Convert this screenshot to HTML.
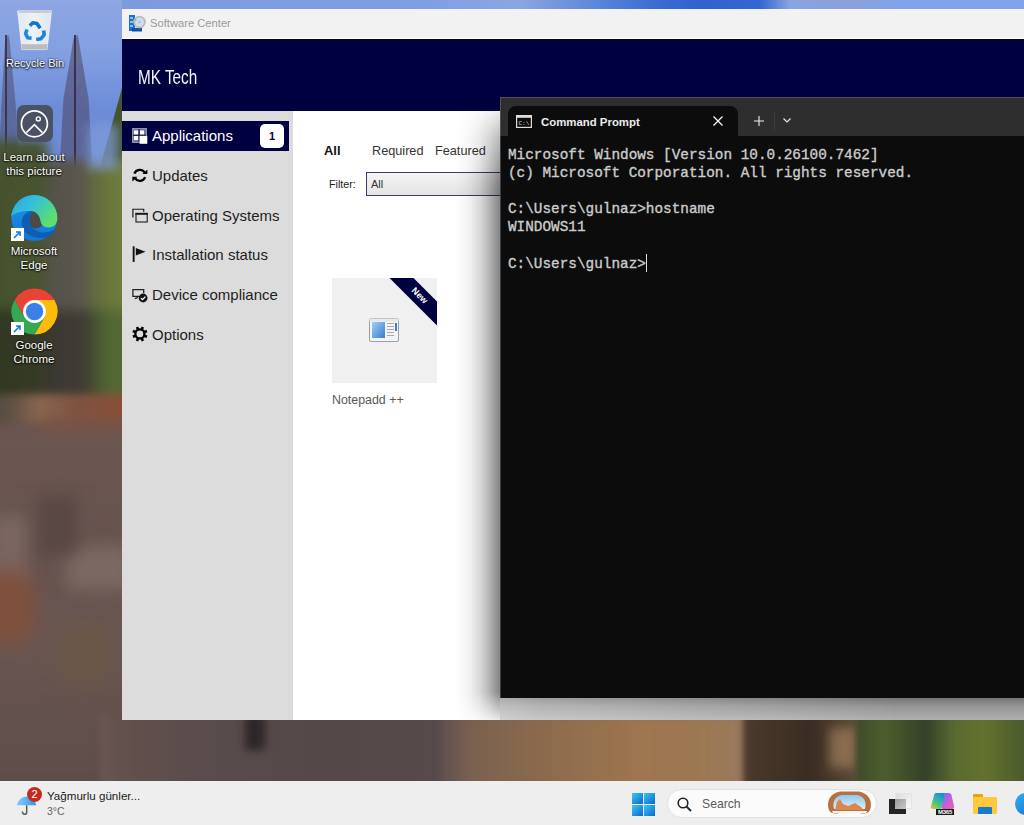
<!DOCTYPE html>
<html><head><meta charset="utf-8">
<style>
*{margin:0;padding:0;box-sizing:border-box}
html,body{width:1024px;height:825px;overflow:hidden;background:#6a5a55;font-family:"Liberation Sans",sans-serif}
.abs{position:absolute}
#bg{position:absolute;left:0;top:0;width:1024px;height:781px;overflow:hidden}
/* software center */
#sc{position:absolute;left:122px;top:9px;width:902px;height:711px;background:#fff}
#sc-title{position:absolute;left:0;top:0;width:902px;height:30px;background:#f2f2f2;border-bottom:1px solid #fff}
#sc-title .t{position:absolute;left:28px;top:8px;font-size:11.2px;color:#9a9a9a;white-space:nowrap}
#sc-head{position:absolute;left:0;top:30px;width:902px;height:72px;background:#000040}
#sc-head .t{position:absolute;left:16px;top:27px;font-size:15.3px;color:#f4f4fa;white-space:nowrap;transform:scaleY(1.27);transform-origin:0 0}
#nav{position:absolute;left:0;top:102px;width:171px;height:609px;background:#dcdcdc}
.nav-item{position:absolute;left:0;width:167px;height:30px;font-size:15px;color:#1e1e1e;white-space:nowrap}
.nav-item .lbl{position:absolute;left:30px;top:6px}
.nav-item svg{position:absolute;left:10px;top:7px}
#main{position:absolute;left:171px;top:102px;width:731px;height:609px;background:#fff}
/* cmd */
#cmd{position:absolute;left:500px;top:97px;width:524px;height:601px;background:#0c0c0c}
#cmd-tabs{position:absolute;left:0;top:0;width:524px;height:39px;background:#2e2e2e}
#cmd-tab{position:absolute;left:8px;top:9px;width:230px;height:30px;background:#0c0c0c;border-radius:8px 8px 0 0}
#cmd-text{position:absolute;left:8px;top:48.5px;font-family:"Liberation Mono",monospace;font-size:14.37px;line-height:18.2px;color:#cccccc;white-space:pre;-webkit-text-stroke:0.35px #cccccc}
/* taskbar */
#tb{position:absolute;left:0;top:781px;width:1024px;height:44px;background:#eeeeee}
.dtxt{position:absolute;color:#fff;font-size:11.5px;text-align:center;line-height:14px;text-shadow:0 0 2px #000,0 1px 2px #000;white-space:nowrap}
</style></head><body>
<div id="bg">
  <div class="abs" style="left:0;top:0;width:1024px;height:781px;background:#6a5550"></div>
  <!-- sky -->
  <div class="abs" style="left:0;top:0;width:1024px;height:230px;background:linear-gradient(180deg,#8ea6e2 0,#809ee0 60px,#7394da 150px,#7a98dc 230px)"></div>
  <div class="abs" style="left:122px;top:0;width:902px;height:12px;background:linear-gradient(90deg,#7b9ae0 0,#7e9ee6 298px,#8aa6e2 398px,#5a84da 478px,#3a6ad2 538px,#2f62d0 578px,#3466d0 638px,#88a4e2 668px,#8aa0d8 728px,#7ea2ea 778px,#7ea2ea 902px)"></div>
  
  <!-- trees in sky -->
  <div class="abs" style="left:0;top:60px;width:122px;height:100px;background:linear-gradient(180deg,rgba(110,140,215,0) 0,rgba(100,132,214,0.6) 50px,rgba(105,136,216,0.4) 100px)"></div>
  <div class="abs" style="left:-3px;top:35px;width:22px;height:150px;background:repeating-linear-gradient(170deg,rgba(80,50,90,0.65) 0 2px,rgba(60,110,120,0.35) 2px 4px);clip-path:polygon(38% 0,55% 0,100% 70%,80% 100%,0 100%);filter:blur(2px)"></div>
  <div class="abs" style="left:5px;top:35px;width:2px;height:150px;background:rgba(50,30,50,0.7)"></div>
  <div class="abs" style="left:58px;top:35px;width:36px;height:160px;background:repeating-linear-gradient(160deg,rgba(80,50,90,0.7) 0 2px,rgba(70,100,110,0.4) 2px 4px);clip-path:polygon(45% 0,55% 0,85% 40%,100% 100%,0 100%,15% 40%);filter:blur(2px)"></div>
  <div class="abs" style="left:74px;top:35px;width:2px;height:165px;background:rgba(50,30,50,0.75)"></div>
  <div class="abs" style="left:98px;top:88px;width:40px;height:120px;background:#44542e;clip-path:polygon(60% 0,100% 0,100% 100%,0 100%,10% 60%);filter:blur(1px)"></div>
  <!-- forest -->
  <div class="abs" style="left:-20px;top:160px;width:160px;height:245px;filter:blur(4px);background:
     linear-gradient(90deg,#44502c 0,#4a5530 60px,#55524a 72px,#5a564e 100px,#646e3e 118px,#6e7e3c 142px)"></div>
  <div class="abs" style="left:-20px;top:140px;width:68px;height:40px;background:#465230;filter:blur(6px)"></div>
  <div class="abs" style="left:-20px;top:310px;width:160px;height:95px;filter:blur(6px);background:linear-gradient(90deg,rgba(30,36,26,0.55) 0,rgba(34,32,28,0.5) 80px,rgba(34,36,28,0.5) 108px,rgba(50,80,40,0.4) 125px,rgba(50,70,40,0.4) 160px)"></div>
  <div class="abs" style="left:88px;top:125px;width:30px;height:45px;background:#7e9ad8;filter:blur(5px);opacity:0.7"></div>
  <!-- transition -->
  <div class="abs" style="left:-20px;top:394px;width:160px;height:30px;filter:blur(4px);background:linear-gradient(90deg,#4e4a3e 0,#5e5044 30px,#8a6650 60px,#805440 95px,#8a4e38 142px)"></div>
  <div class="abs" style="left:40px;top:418px;width:100px;height:40px;filter:blur(6px);background:#7a5446"></div>
  <!-- rocks -->
  <div class="abs" style="left:-20px;top:432px;width:160px;height:360px;filter:blur(5px);background:linear-gradient(180deg,#6c5650 0,#66524e 120px,#6a5652 200px,#62504c 300px,#5e4c48 360px)"></div>
  <div class="abs" style="left:-10px;top:515px;width:38px;height:70px;background:#7a6660;filter:blur(8px);border-radius:8px"></div>
  <div class="abs" style="left:66px;top:545px;width:66px;height:45px;background:#7c6862;filter:blur(8px);border-radius:8px"></div>
  <div class="abs" style="left:38px;top:495px;width:40px;height:60px;background:#5a4844;filter:blur(8px)"></div>
  <div class="abs" style="left:-15px;top:570px;width:50px;height:75px;background:#80503c;filter:blur(10px);border-radius:40%"></div>
  <div class="abs" style="left:60px;top:625px;width:50px;height:60px;background:#6a5646;filter:blur(10px)"></div>
  <!-- bottom strip -->
  <div class="abs" style="left:100px;top:715px;width:352px;height:80px;filter:blur(3px);background:linear-gradient(90deg,#6a5652 0,#62504c 22px,#5a4c4c 100px,#544848 220px,#564a4a 340px)"></div>
  <div class="abs" style="left:245px;top:715px;width:20px;height:35px;background:#2e2628;filter:blur(4px)"></div>
  <div class="abs" style="left:440px;top:715px;width:310px;height:80px;filter:blur(3px);background:linear-gradient(90deg,#5e5050 0,#7a6050 30px,#8a6a4c 100px,#9e7650 200px,#9c7852 260px,#987a5e 300px,#5a4430 310px)"></div>
  <div class="abs" style="left:745px;top:715px;width:110px;height:80px;filter:blur(3px);background:linear-gradient(90deg,#4a3a2c,#3a2c22 60%,#5a4a34)"></div>
  <div class="abs" style="left:830px;top:728px;width:40px;height:40px;background:#8a6c50;filter:blur(6px)"></div>
  <div class="abs" style="left:855px;top:715px;width:190px;height:80px;filter:blur(3px);background:linear-gradient(90deg,#3e4a2a,#4e5e2c 30px,#344028 70px,#5a6a30 100px,#64722e 130px,#4a5a2c 169px)"></div>
</div>

<!-- desktop icons -->
<div id="icons">
  <!-- recycle bin -->
  <svg class="abs" style="left:17px;top:9px" width="36" height="42" viewBox="0 0 36 42">
    <defs><linearGradient id="binG" x1="0" y1="0" x2="1" y2="0"><stop offset="0" stop-color="#e4e8f0"/><stop offset="0.5" stop-color="#eef1f7"/><stop offset="1" stop-color="#dfe4ee"/></linearGradient></defs>
    <path d="M0.7 2 L34.5 2 L30 40.6 L4.9 40.6 Z" fill="url(#binG)" stroke="#f4f6fa" stroke-width="0.8"/>
    <rect x="1.5" y="1" width="33" height="3" fill="#c8ccd4"/>
    <path d="M4.3 35.3 L30.6 35.3 L30 40.6 L4.9 40.6 Z" fill="#b9bcc2"/>
    <g fill="none" stroke-width="3.6" stroke-linejoin="round">
      <path d="M12.8 16.8 L15.8 13.8 L20 14.6 L23.2 19.2" stroke="#1474cc"/>
      <path d="M10 20.5 L8.6 24.6 L10.8 28.8 L14.6 29.2" stroke="#1d8ae2"/>
      <path d="M26.6 21.5 L27.2 25.8 L23.8 29.8 L19.2 30.6" stroke="#1a82da"/>
    </g>
  </svg>
  <div class="dtxt" style="left:3px;top:56px;width:64px;font-size:11px">Recycle Bin</div>
  <!-- learn about picture -->
  <div class="abs" style="left:17px;top:105px;width:36px;height:37px;background:#4a5263;border-radius:7px"></div>
  <svg class="abs" style="left:17px;top:105px" width="36" height="36" viewBox="0 0 36 36">
    <circle cx="17.4" cy="18.8" r="13" fill="none" stroke="#fff" stroke-width="1.7"/>
    <path d="M9.4 27.6 L17.4 19.7 L25.4 27.6" fill="none" stroke="#fff" stroke-width="1.7"/>
    <circle cx="21.3" cy="13.9" r="2" fill="none" stroke="#fff" stroke-width="1.4"/>
  </svg>
  <div class="dtxt" style="left:0;top:150px;width:68px">Learn about<br>this picture</div>
  <!-- edge -->
  <svg class="abs" style="left:11px;top:195px" width="47" height="47" viewBox="0 0 47 47">
    <defs>
      <linearGradient id="eg1" x1="0" y1="0" x2="1" y2="0.6"><stop offset="0" stop-color="#2aa6ec"/><stop offset="0.45" stop-color="#33c0d8"/><stop offset="1" stop-color="#5fe06a"/></linearGradient>
      <linearGradient id="eg0" x1="0" y1="0" x2="0" y2="1"><stop offset="0" stop-color="#2196e8"/><stop offset="1" stop-color="#0e78d6"/></linearGradient>
    </defs>
    <circle cx="23.3" cy="23" r="23" fill="url(#eg0)"/>
    <ellipse cx="25" cy="25" rx="8" ry="8.5" fill="#4c4a42"/>
    <path d="M0.3 23 A23 23 0 0 1 46.3 23 C46.3 29 43 32.5 37.5 32.5 C32.5 32.5 30 29.5 29.5 26 C29 21 25.5 16.5 20 16 C12 15.5 5 17 0.6 21 Z" fill="url(#eg1)"/>
    <path d="M20 16 C12.5 17.5 10 24 11 30 C12.5 38 20 43 30 43 C37 43 42 40 45 33.5 C41 36.5 35 38 30 37.5 C24 36 19 31 19 25 C19 21 21 17.5 23 16.7 Z" fill="#0f5eb2"/>
  </svg>
  <div class="abs" style="left:11px;top:228px;width:13px;height:13px;background:#fff"></div>
  <svg class="abs" style="left:11px;top:228px" width="13" height="13" viewBox="0 0 13 13"><path d="M3 10 L9 4 M5 4 L9 4 L9 8" stroke="#1a7ad8" stroke-width="1.6" fill="none"/></svg>
  <div class="dtxt" style="left:0;top:244px;width:68px">Microsoft<br>Edge</div>
  <!-- chrome -->
  <svg class="abs" style="left:11px;top:288px" width="47" height="47" viewBox="0 0 47 47">
    <path d="M13.58 29.22 L3.6 11.95 A23 23 0 0 1 43.45 12.05 L23.5 12.05 Z" fill="#e94335"/>
    <path d="M23.5 12.05 L43.45 12.05 A23 23 0 0 1 23.44 46.5 L33.42 29.22 Z" fill="#fbbd0a"/>
    <path d="M33.42 29.22 L23.44 46.5 A23 23 0 0 1 3.6 11.95 L13.58 29.22 Z" fill="#34a853"/>
    <circle cx="23.5" cy="23.5" r="11.45" fill="#fff"/>
    <circle cx="23.5" cy="23.5" r="8.7" fill="#3b7fe8"/>
  </svg>
  <div class="abs" style="left:11px;top:322px;width:13px;height:13px;background:#fff"></div>
  <svg class="abs" style="left:11px;top:322px" width="13" height="13" viewBox="0 0 13 13"><path d="M3 10 L9 4 M5 4 L9 4 L9 8" stroke="#1a7ad8" stroke-width="1.6" fill="none"/></svg>
  <div class="dtxt" style="left:0;top:338px;width:68px">Google<br>Chrome</div>
</div>

<div id="sc">
  <div id="sc-title">
    <svg class="abs" style="left:7px;top:6px" width="17" height="17" viewBox="0 0 17 17">
      <rect x="0" y="0" width="6" height="16" fill="#1e6fd0"/>
      <rect x="1" y="2" width="3" height="2" fill="#7fc0f5"/><rect x="1" y="6" width="3" height="2" fill="#7fc0f5"/><rect x="1" y="10" width="3" height="2" fill="#7fc0f5"/>
      <rect x="3" y="13" width="10" height="3.5" fill="#1450b0"/>
      <circle cx="10.5" cy="7" r="6.3" fill="#b8bcc2"/>
      <circle cx="10.5" cy="7" r="4.5" fill="#d8dbe0"/>
      <circle cx="10.5" cy="7" r="1.6" fill="#8fd0ff"/>
      <circle cx="6.5" cy="5" r="1" fill="#6fd06f"/>
    </svg>
    <div class="t">Software Center</div>
  </div>
  <div id="sc-head"><div class="t">MK Tech</div></div>
  <div id="nav">
    <div class="nav-item" style="top:10px;background:#000040;color:#fff">
      <svg width="16" height="16" viewBox="0 0 16 16" style="left:10px;top:7px">
        <rect x="0.75" y="0.75" width="13.5" height="13.5" fill="#5a5a88" stroke="#9090b4" stroke-width="1.5"/>
        <rect x="2" y="2.4" width="4.3" height="4.2" fill="#fff"/>
        <rect x="8" y="2.4" width="4.2" height="4.2" fill="#fff"/>
        <rect x="2" y="8" width="4.3" height="4.2" fill="#fff"/>
        <path d="M7.1 1 L7.1 14 M1 7.3 L14 7.3" stroke="#202050" stroke-width="1.2"/>
        <rect x="7.6" y="7.9" width="7.7" height="7.9" fill="#fff"/>
      </svg>
      <span class="lbl">Applications</span>
      <div class="abs" style="left:138px;top:3px;width:24px;height:24px;background:#fff;border-radius:5px;color:#000040;font-weight:bold;font-size:11px;text-align:center;line-height:24px">1</div>
    </div>
    <div class="nav-item" style="top:50px">
      <svg width="17" height="17" viewBox="0 0 17 17" style="left:10px;top:6px">
        <path d="M2.44 6.6 A5.7 5.7 0 0 1 12.6 5.5" fill="none" stroke="#000" stroke-width="2.3"/>
        <path d="M15.4 2.4 L15.4 7.1 L10.4 7.1 Z" fill="#000"/>
        <path d="M13.16 10.2 A5.7 5.7 0 0 1 3.2 11.5" fill="none" stroke="#000" stroke-width="2.3"/>
        <path d="M0.4 9.7 L0.4 14.4 L5.4 9.7 Z" fill="#000"/>
      </svg>
      <span class="lbl">Updates</span>
    </div>
    <div class="nav-item" style="top:90px">
      <svg width="17" height="16" viewBox="0 0 17 16" style="left:10px;top:7px">
        <path d="M0.9 9.6 L0.9 1.25 L11.7 1.25 L11.7 3.8" fill="none" stroke="#1a1a1a" stroke-width="1.2"/>
        <rect x="4.0" y="5.5" width="11.2" height="8.5" fill="none" stroke="#2a2a2a" stroke-width="1.2"/>
        <rect x="3.4" y="4.9" width="12.4" height="1.9" fill="#1a1a1a"/>
      </svg>
      <span class="lbl">Operating Systems</span>
    </div>
    <div class="nav-item" style="top:129px">
      <svg width="14" height="17" viewBox="0 0 14 17" style="left:10px;top:6px">
        <rect x="0.7" y="0.3" width="1.9" height="15.6" fill="#111"/>
        <path d="M3.8 1.9 L13.5 5.7 L3.8 9.6 Z" fill="#111"/>
      </svg>
      <span class="lbl">Installation status</span>
    </div>
    <div class="nav-item" style="top:169px">
      <svg width="17" height="16" viewBox="0 0 17 16" style="left:10px;top:8px">
        <path d="M7.5 8.3 L0.9 8.3 L0.9 1.6 L11.7 1.6 L11.7 5" fill="none" stroke="#222" stroke-width="1.3"/>
        <path d="M2.8 10.6 Q4.5 10.4 5.8 9.2" fill="none" stroke="#222" stroke-width="1.2"/>
        <circle cx="11.1" cy="10" r="4.4" fill="#111"/>
        <path d="M8.9 10.1 L10.5 11.6 L13.4 8.6" fill="none" stroke="#fff" stroke-width="1.3"/>
      </svg>
      <span class="lbl">Device compliance</span>
    </div>
    <div class="nav-item" style="top:209px">
      <svg width="16" height="16" viewBox="0 0 16 16" style="left:10px;top:6px">
        <g fill="#000"><rect x="6.6" y="0.3" width="2.6" height="3.6" transform="rotate(22.5 7.9 7.9)"/><rect x="6.6" y="0.3" width="2.6" height="3.6" transform="rotate(67.5 7.9 7.9)"/><rect x="6.6" y="0.3" width="2.6" height="3.6" transform="rotate(112.5 7.9 7.9)"/><rect x="6.6" y="0.3" width="2.6" height="3.6" transform="rotate(157.5 7.9 7.9)"/><rect x="6.6" y="0.3" width="2.6" height="3.6" transform="rotate(202.5 7.9 7.9)"/><rect x="6.6" y="0.3" width="2.6" height="3.6" transform="rotate(247.5 7.9 7.9)"/><rect x="6.6" y="0.3" width="2.6" height="3.6" transform="rotate(292.5 7.9 7.9)"/><rect x="6.6" y="0.3" width="2.6" height="3.6" transform="rotate(337.5 7.9 7.9)"/></g>
        <circle cx="7.9" cy="7.9" r="4.55" fill="none" stroke="#000" stroke-width="2.3"/>
      </svg>
      <span class="lbl">Options</span>
    </div>
  </div>
  <div id="main">
    <div class="abs" style="left:31px;top:32px;font-size:12.9px;font-weight:bold;color:#111">All</div>
    <div class="abs" style="left:79px;top:33px;font-size:12.7px;color:#333">Required</div>
    <div class="abs" style="left:142px;top:33px;font-size:12.7px;color:#333">Featured</div>
    <div class="abs" style="left:36px;top:66.7px;font-size:10.7px;color:#222">Filter:</div>
    <div class="abs" style="left:73px;top:61px;width:400px;height:24px;border:1px solid #3c3c6e;background:linear-gradient(180deg,#f4f4f4,#e4e4e4)">
      <div class="abs" style="left:4px;top:5px;font-size:11px;color:#333">All</div>
    </div>
    <!-- tile -->
    <div class="abs" style="left:39px;top:167px;width:105px;height:105px;background:#f0f0f0;overflow:hidden">
      <div class="abs" style="left:42px;top:14px;width:100px;height:17px;background:#000040;transform:rotate(45deg);color:#fff;font-size:9px;font-weight:bold;text-align:center;line-height:17px;padding-right:13px">New</div>
      <svg class="abs" style="left:37px;top:40px" width="30" height="25" viewBox="0 0 30 25">
        <rect x="0.5" y="0.5" width="29" height="23" rx="1.5" fill="#f4f4f4" stroke="#9aa0a8"/>
        <rect x="0.5" y="0.5" width="29" height="3" fill="#e6e8ea"/>
        <defs><linearGradient id="ng" x1="0" y1="0" x2="1" y2="1"><stop offset="0" stop-color="#9fd0f8"/><stop offset="1" stop-color="#3a7ed0"/></linearGradient></defs>
        <rect x="3" y="4" width="13" height="16" fill="url(#ng)"/>
        <g fill="#aaa"><rect x="18" y="5" width="7" height="1"/><rect x="18" y="8" width="7" height="1"/><rect x="18" y="11" width="7" height="1"/><rect x="18" y="14" width="7" height="1"/><rect x="18" y="17" width="7" height="1"/></g>
        <rect x="26" y="5" width="2" height="8" fill="#3a7ed0"/>
      </svg>
    </div>
    <div class="abs" style="left:39px;top:281.5px;font-size:12.4px;color:#5a5a5a;white-space:nowrap">Notepadd ++</div>
  </div>
</div>

<!-- cmd shadow -->
<div class="abs" style="left:122px;top:9px;width:902px;height:711px;overflow:hidden"><div class="abs" style="left:333px;top:88px;width:45px;height:623px;background:linear-gradient(90deg,rgba(0,0,0,0) 0,rgba(0,0,0,0.025) 8px,rgba(0,0,0,0.06) 15px,rgba(0,0,0,0.15) 25px,rgba(0,0,0,0.3) 35px,rgba(0,0,0,0.45) 43px,rgba(0,0,0,0.47) 45px);-webkit-mask-image:linear-gradient(180deg,rgba(0,0,0,0) 0,rgba(0,0,0,0.15) 14px,rgba(0,0,0,0.55) 40px,#000 90px,#000 595px,rgba(0,0,0,0.2) 623px)"></div>
  <div class="abs" style="left:378px;top:689px;width:524px;height:22px;background:linear-gradient(180deg,rgba(0,0,0,0.54) 0,rgba(0,0,0,0.42) 8px,rgba(0,0,0,0.31) 22px);-webkit-mask-image:linear-gradient(90deg,rgba(0,0,0,0.6) 0,rgba(0,0,0,0.7) 40px,rgba(0,0,0,1) 400px)"></div></div>
<div id="cmd">
  <div class="abs" style="left:0;top:0;width:524px;height:601px;border-left:1px solid rgba(120,120,150,0.45);border-top:1px solid rgba(120,120,150,0.45);z-index:5;pointer-events:none"></div>
  <div id="cmd-tabs">
    <div id="cmd-tab">
      <svg class="abs" style="left:8px;top:9px" width="16" height="13" viewBox="0 0 16 13">
        <rect x="0.6" y="0.6" width="14.8" height="11.8" fill="none" stroke="#ddd" stroke-width="1.2"/>
        <rect x="0.6" y="0.6" width="14.8" height="2.2" fill="#ddd"/>
        <text x="2.5" y="10" font-size="6" fill="#ddd" font-family="Liberation Mono">C:\</text>
      </svg>
      <div class="abs" style="left:33px;top:9.5px;font-size:11.4px;font-weight:bold;color:#ececec;white-space:nowrap">Command Prompt</div>
      <svg class="abs" style="left:205px;top:10px" width="10" height="10" viewBox="0 0 10 10"><path d="M0.5 0.5 L9.5 9.5 M9.5 0.5 L0.5 9.5" stroke="#fff" stroke-width="1.2"/></svg>
    </div>
    <svg class="abs" style="left:254px;top:19px" width="10" height="10" viewBox="0 0 10 10"><path d="M5 0 L5 10 M0 5 L10 5" stroke="#eee" stroke-width="1.1"/></svg>
    <div class="abs" style="left:274px;top:14px;width:1px;height:20px;background:#3c3c3c"></div>
    <svg class="abs" style="left:283px;top:21px" width="8" height="5" viewBox="0 0 8 5"><path d="M0.5 0.5 L4 4 L7.5 0.5" stroke="#eee" stroke-width="1.1" fill="none"/></svg>
  </div>
  <div id="cmd-text">Microsoft Windows [Version 10.0.26100.7462]
(c) Microsoft Corporation. All rights reserved.

C:\Users\gulnaz>hostname
WINDOWS11

C:\Users\gulnaz></div>
  <div class="abs" style="left:146px;top:157px;width:1px;height:18px;background:#ddd"></div>
</div>

<div id="tb">
  <!-- weather -->
  <svg class="abs" style="left:15px;top:13px" width="23" height="23" viewBox="0 0 23 23">
    <defs><linearGradient id="umb" x1="0" y1="0" x2="1" y2="0"><stop offset="0" stop-color="#8ccaf8"/><stop offset="0.5" stop-color="#5ab2f6"/><stop offset="1" stop-color="#2a96f0"/></linearGradient></defs>
    <path d="M1.8 11.3 Q4 3 11.5 2.6 Q19 3 21.2 11.3 Z" fill="url(#umb)"/>
    <path d="M11.7 11.3 L11.7 18.2 Q11.7 20.3 9.6 20.3 Q7.4 20.3 7.4 17.6" stroke="#5a5a5a" stroke-width="1.5" fill="none"/>
  </svg>
  <div class="abs" style="left:27px;top:5.5px;width:15px;height:15px;border-radius:50%;background:#c42b1c;color:#fff;font-size:11px;text-align:center;line-height:15px">2</div>
  <div class="abs" style="left:47px;top:8px;font-size:11.6px;color:#1a1a1a;white-space:nowrap">Yağmurlu günler...</div>
  <div class="abs" style="left:47px;top:24px;font-size:10.5px;color:#666;white-space:nowrap">3°C</div>
  <!-- start -->
  <svg class="abs" style="left:632px;top:12px" width="23" height="23" viewBox="0 0 23 23">
    <defs><linearGradient id="wg" x1="0" y1="0" x2="1" y2="1"><stop offset="0" stop-color="#3bc6f4"/><stop offset="1" stop-color="#0a68d0"/></linearGradient></defs>
    <rect x="0" y="0" width="11" height="11" fill="url(#wg)"/>
    <rect x="12" y="0" width="11" height="11" fill="url(#wg)"/>
    <rect x="0" y="12" width="11" height="11" fill="url(#wg)"/>
    <rect x="12" y="12" width="11" height="11" fill="url(#wg)"/>
  </svg>
  <!-- search -->
  <div class="abs" style="left:667px;top:8px;width:210px;height:29px;border-radius:15px;background:#fbfbfb;border:1px solid #e2e2e2"></div>
  <svg class="abs" style="left:677px;top:16px" width="15" height="15" viewBox="0 0 15 15"><circle cx="6" cy="6" r="4.8" stroke="#222" stroke-width="1.6" fill="none"/><path d="M9.5 9.5 L14 14" stroke="#222" stroke-width="1.8"/></svg>
  <div class="abs" style="left:702px;top:16px;font-size:12.2px;color:#5a5a5a">Search</div>
  <svg class="abs" style="left:826px;top:9px" width="47" height="25" viewBox="0 0 47 25">
    <defs><linearGradient id="bsky" x1="0" y1="0" x2="0" y2="1"><stop offset="0" stop-color="#8ec8ee"/><stop offset="1" stop-color="#dff0f8"/></linearGradient></defs>
    <path d="M3 20 C0 12 4 3 14 1.5 L33 1.5 C43 3 47 12 44 20 C42 24 38 24 34 23 L13 23 C9 24 5 24 3 20Z" fill="#b8703e"/>
    <path d="M8 19 C6 12 9 6 16 5 L31 5 C38 6 41 12 39 19 Z" fill="url(#bsky)"/>
    <path d="M9 20 L11 12 L14 9 L17 14 L22 16 L29 13 L35 17 L38 20 Z" fill="#d88850"/>
    <path d="M6 21 L41 21 L40 23 L7 23 Z" fill="#f2f2f2"/>
  </svg>
  <!-- task view -->
  <div class="abs" style="left:895px;top:12px;width:17px;height:16px;background:linear-gradient(135deg,#dcdcdc,#fafafa);border:1px solid #e4e4e4"></div>
  <div class="abs" style="left:889px;top:18px;width:17px;height:15px;background:#242424"></div>
  <div class="abs" style="left:895px;top:18px;width:11px;height:10px;background:linear-gradient(135deg,#9a9a9a,#c8c8c8)"></div>
  <!-- m365 -->
  <svg class="abs" style="left:930px;top:11px" width="25" height="18" viewBox="0 0 25 18">
    <defs>
      <linearGradient id="cp1" x1="0" y1="1" x2="0.6" y2="0"><stop offset="0" stop-color="#f6c12a"/><stop offset="0.4" stop-color="#48c878"/><stop offset="1" stop-color="#1a8ee8"/></linearGradient>
      <linearGradient id="cp2" x1="0" y1="0" x2="1" y2="1"><stop offset="0" stop-color="#4a7ef0"/><stop offset="0.5" stop-color="#c060e0"/><stop offset="1" stop-color="#f060a0"/></linearGradient>
    </defs>
    <path d="M6 1 L15 1 C16 1 16.5 2 16 3 L11 16 C10.5 17 10 17 9 17 L3 17 C1 17 0.5 16 1 14 L4 3.5 C4.5 2 5 1 6 1Z" fill="url(#cp1)"/>
    <path d="M14 1 L19 1 C20.5 1 21 2 21.5 3 L24 14 C24.5 16 23.5 17 22 17 L13 17 C11.5 17 11 16 11.5 15 L14 6 Z" fill="url(#cp2)"/>
  </svg>
  <div class="abs" style="left:936px;top:28px;width:18px;height:6px;background:#1a1a1a;color:#fff;font-size:6px;line-height:6px;text-align:center;font-weight:bold;letter-spacing:-0.2px">M365</div>
  <!-- folder -->
  <div class="abs" style="left:973px;top:12.5px;width:10px;height:5px;background:#e4a800;border-radius:1px 1px 0 0"></div>
  <div class="abs" style="left:973px;top:16px;width:23.5px;height:17px;background:#ffc83d;border-radius:1px"></div>
  <div class="abs" style="left:977.5px;top:26px;width:14px;height:7px;background:#1a78d0;border-radius:1px 1px 0 0"></div>
  <!-- edge partial -->
  <div class="abs" style="left:1015px;top:12px;width:22px;height:22px;border-radius:50%;background:linear-gradient(135deg,#30b0f0,#1a6cd0)"></div>
</div>
</body></html>
